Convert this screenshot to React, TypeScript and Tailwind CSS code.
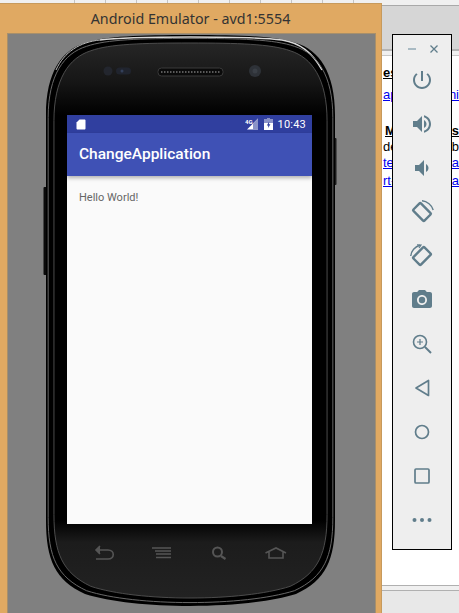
import React from "react";

const phoneOutline =
  "M190 35C140 35 105 36 85 43C62 50 46 72 46 115L46 520C46 560 55 580 85 594C110 602 150 606 190 606C230 606 270 602 296 594C326 580 335 560 335 520L335 115C335 72 319 50 296 43C276 36 240 35 190 35Z";

const docLines = [
  { left: "es", right: "", top: "mt-[10px]", cls: "font-bold underline text-black" },
  { left: "ap", right: "ni", top: "mt-[8px]", cls: "text-[#0000ee] underline" },
  { left: "M", right: "es", top: "mt-[22px] pl-[2px]", cls: "font-bold underline text-black" },
  { left: "de", right: "b", top: "mt-[2px]", cls: "text-black" },
  { left: "te", right: "ra", top: "mt-[2px]", cls: "text-[#0000ee] underline" },
  { left: "rt-", right: "na", top: "mt-[4px]", cls: "text-[#0000ee] underline" },
];

const sheetCells = [0, 1, 2, 3, 4, 5, 6, 7, 8, 9];

function Icon({ children, size = 24 }: { children: React.ReactNode; size?: number }) {
  return (
    <svg width={size} height={size} viewBox="0 0 24 24" fill="#607d8b">
      {children}
    </svg>
  );
}

function PhoneBody() {
  return (
    <svg className="absolute inset-0" width="296" height="579" viewBox="42 34 296 579">
      <defs>
        <linearGradient id="face" x1="0" y1="0" x2="0" y2="1">
          <stop offset="0" stopColor="#262626" />
          <stop offset="0.07" stopColor="#161616" />
          <stop offset="0.13" stopColor="#000" />
          <stop offset="0.86" stopColor="#000" />
          <stop offset="0.9" stopColor="#1c1c1c" />
          <stop offset="1" stopColor="#222" />
        </linearGradient>
      </defs>
      <rect x="43.5" y="187" width="4" height="88" rx="1" fill="#0a0a0a" />
      <rect x="333" y="138" width="3.5" height="47" rx="1" fill="#1a1a1a" />
      <path d={phoneOutline} fill="#000" />
      <path d="M100 40C130 36 250 36 282 40C300 43 312 52 322 70" fill="none" stroke="#d8d8d8" strokeWidth="1.4" />
      <path d="M100 40C80 42 64 52 56 70" fill="none" stroke="#bbb" strokeWidth="1" />
      <g transform="translate(190.5 320.5) scale(0.985 0.988) translate(-190.5 -320.5)">
        <path d={phoneOutline} fill="none" stroke="#6a6a6a" strokeWidth="1" />
      </g>
      <g transform="translate(190.5 320.5) scale(0.945 0.972) translate(-190.5 -320.5)">
        <path d={phoneOutline} fill="url(#face)" stroke="#4e4e4e" strokeWidth="1" />
      </g>

      <circle cx="108" cy="71" r="4.5" fill="#23262e" />
      <rect x="116" y="67.5" width="15" height="7" rx="3.5" fill="#20242e" />
      <circle cx="122" cy="71" r="1.5" fill="#33405a" />
      <circle cx="255" cy="71" r="6" fill="#2e3238" />
      <circle cx="255" cy="71" r="2.5" fill="#3a3f46" />
      <rect x="158" y="68" width="65" height="8" rx="3.5" fill="#0a0a0a" stroke="#3a3a3a" strokeWidth="1" />
      <line x1="161" y1="72" x2="220" y2="72" stroke="#5a5a5a" strokeWidth="2" strokeDasharray="1.5 1.5" />

      <g fill="none" stroke="#555" strokeWidth="1.6">
        <path d="M97 550L108 550C115 550 115 559 108 559L96 559" />
        <path d="M100 546L96 550L100 554" fill="#555" />
        <path d="M152 548H171M155 551H171M156 554H171M156 557.5H171" />
        <circle cx="217.5" cy="552" r="4.5" strokeWidth="2" />
        <path d="M221 556L225.5 559" strokeWidth="2.2" />
        <path d="M265.5 553L276 548L286 553M269 552V558H283V552" />
      </g>
    </svg>
  );
}

function StatusBar() {
  return (
    <div className="flex h-[18px] items-center bg-[#303f9f] pl-[9px] pr-[6px]">
      <svg width="10" height="11" viewBox="0 0 10 11">
        <path d="M3.5 0.5H8.5C9 0.5 9.5 1 9.5 1.5V9.5C9.5 10 9 10.5 8.5 10.5H1.5C1 10.5 0.5 10 0.5 9.5V3.5Z" fill="#fff" />
      </svg>
      <div className="ml-auto flex items-center">
        <svg width="14" height="12" viewBox="0 0 14 12">
          <path d="M13 0.5V11.5H2Z" fill="#fff" />
          <path d="M13 0.5V11.5H8V5.5Z" fill="#8b93c8" />
          <text x="0" y="5.5" fontSize="6" fontWeight="700" fill="#fff" fontFamily="Roboto, sans-serif">4G</text>
        </svg>
        <svg className="ml-[5px]" width="9" height="12" viewBox="0 0 9 12">
          <path d="M3 0H6V1H9V12H0V1H3Z" fill="#fff" />
          <path d="M3 0H6V1H9V5H0V1H3Z" fill="#8b93c8" />
          <path d="M5.2 3.5L2.8 7.5H4.2V10L6.4 6.2H5Z" fill="#303f9f" />
        </svg>
        <span className="ml-[5px] text-[11px] leading-none tracking-[0.2px] text-white [font-family:Roboto,sans-serif]">
          10:43
        </span>
      </div>
    </div>
  );
}

function ToolPanel() {
  return (
    <div className="absolute left-[392px] top-[34px] flex h-[516px] w-[60px] flex-col items-center border border-black bg-[#eeeeee]">
      <div className="mt-[9px] flex h-[10px] w-full items-center justify-center gap-[14px] pl-[2px]">
        <span className="h-[2px] w-[8px] bg-[#a9bac3]" />
        <svg width="8" height="8" viewBox="0 0 8 8" stroke="#607d8b" strokeWidth="1.3">
          <path d="M0.5 0.5L7.5 7.5M7.5 0.5L0.5 7.5" />
        </svg>
      </div>
      <div className="mt-[14px] flex flex-col items-center gap-[20px]">
        <Icon>
          <path d="M13 3h-2v10h2V3zm4.83 2.17l-1.42 1.42C17.99 7.86 19 9.81 19 12c0 3.87-3.13 7-7 7s-7-3.13-7-7c0-2.19 1.01-4.14 2.58-5.42L6.17 5.17C4.23 6.82 3 9.26 3 12c0 4.97 4.03 9 9 9s9-4.03 9-9c0-2.74-1.23-5.18-3.17-6.83z" />
        </Icon>
        <Icon>
          <path d="M3 9v6h4l5 5V4L7 9H3zm13.5 3c0-1.77-1.02-3.29-2.5-4.03v8.05c1.48-.73 2.5-2.25 2.5-4.02zM14 3.23v2.06c2.89.86 5 3.54 5 6.71s-2.11 5.85-5 6.71v2.06c4.01-.91 7-4.49 7-8.77s-2.99-7.86-7-8.77z" />
        </Icon>
        <Icon>
          <path d="M18.5 12c0-1.77-1.02-3.29-2.5-4.03v8.05c1.48-.73 2.5-2.25 2.5-4.02zM5 9v6h4l5 5V4L9 9H5z" />
        </Icon>
        <Icon>
          <g fill="none" stroke="#607d8b">
            <rect x="6.7" y="4.2" width="10.6" height="15.6" rx="1" transform="rotate(-45 12 12)" strokeWidth="2.4" />
            <path d="M12 0.8C17 1.2 22 5 23.2 10" strokeWidth="1.4" />
          </g>
        </Icon>
        <Icon>
          <g fill="none" stroke="#607d8b">
            <rect x="6.7" y="4.2" width="10.6" height="15.6" rx="1" transform="rotate(45 12 12)" strokeWidth="2.4" />
            <path d="M0.8 12C1 7 5 2.5 10 1.2" strokeWidth="1.4" />
            <path d="M7 0.8L11 1L9 4" strokeWidth="1.2" />
          </g>
        </Icon>
        <Icon>
          <path d="M9 2L7.17 4H4c-1.1 0-2 .9-2 2v12c0 1.1.9 2 2 2h16c1.1 0 2-.9 2-2V6c0-1.1-.9-2-2-2h-3.17L15 2H9zm3 15c-2.76 0-5-2.24-5-5s2.24-5 5-5 5 2.24 5 5-2.24 5-5 5z" />
          <circle cx="12" cy="12" r="3.2" />
        </Icon>
        <Icon>
          <g fill="none" stroke="#607d8b" strokeWidth="1.6">
            <circle cx="10" cy="10" r="6.5" />
            <path d="M15 15L21 21" strokeWidth="2" />
            <path d="M10 7V13M7 10H13" strokeWidth="1.2" />
          </g>
        </Icon>
        <Icon>
          <path d="M18.5 4.5V19.5L6 12Z" fill="none" stroke="#607d8b" strokeWidth="1.7" strokeLinejoin="round" />
        </Icon>
        <Icon>
          <circle cx="12" cy="12" r="6.5" fill="none" stroke="#607d8b" strokeWidth="1.7" />
        </Icon>
        <Icon>
          <rect x="5" y="5" width="14" height="14" rx="1" fill="none" stroke="#607d8b" strokeWidth="1.7" />
        </Icon>
        <Icon>
          <circle cx="4.5" cy="12" r="2" />
          <circle cx="12" cy="12" r="2" />
          <circle cx="19.5" cy="12" r="2" />
        </Icon>
      </div>
    </div>
  );
}

function EmulatorWindow() {
  return (
    <div className="absolute left-0 top-[3px] flex h-[610px] w-[382px] flex-col border-r border-t border-[#c79a5c] bg-[#e0a962]">
      <div className="flex h-[29px] items-center justify-center text-[14.3px] text-[#333333] [font-family:'Noto_Sans',sans-serif]">
        Android Emulator - avd1:5554
      </div>
      <div className="ml-[7px] w-[369px] flex-1 overflow-hidden border-l border-t border-r border-[#a78f6b] bg-[#808080] pl-[34px]">
        <div className="relative h-[579px] w-[296px] pl-[25px] pt-[81px]">
          <PhoneBody />
          <div className="relative flex h-[409px] w-[245px] flex-col bg-[#fafafa]">
            <StatusBar />
            <div className="flex h-[43px] items-center bg-[#3f51b5] pl-[12px] pt-[1px] text-[15.5px] font-medium text-white shadow-[0_2px_4px_rgba(0,0,0,0.3)] [font-family:Roboto,sans-serif]">
              ChangeApplication
            </div>
            <p className="pl-[12px] pt-[15px] text-[11px] leading-[13px] text-[#666666] [font-family:Roboto,sans-serif]">
              Hello World!
            </p>
          </div>
        </div>
      </div>
    </div>
  );
}

export default function App() {
  return (
    <div className="relative flex h-[613px] w-[459px] flex-col overflow-hidden bg-white [font-family:'Liberation_Sans',sans-serif]">
      <div className="flex h-[6px] border-b border-[#a9a9a9] bg-[#f0f0f0] pl-[44px]">
        {sheetCells.map((cell) => (
          <span key={cell} className="h-full w-[31px] border-r border-[#c4c4c4]" />
        ))}
      </div>
      <div className="h-[45px] border-b-2 border-[#b4b4b4] bg-[#d6d6d6]" />
      <div className="h-[5px] border-b border-[#c8c8c8] bg-[#f0f0f0]" />
      <div className="flex-1 pl-[383px] text-[13px] leading-[14px]">
        {docLines.map((line) => (
          <div key={line.left} className={`flex ${line.top} ${line.cls}`}>
            <span className="w-[69px]">{line.left}</span>
            <span className="whitespace-nowrap">{line.right}</span>
          </div>
        ))}
      </div>
      <div className="h-[6px] border-y border-[#b0b0b0] bg-[#f0f0f0]" />
      <div className="h-[22px] bg-[#e8e8e8]" />
      <EmulatorWindow />
      <ToolPanel />
    </div>
  );
}
